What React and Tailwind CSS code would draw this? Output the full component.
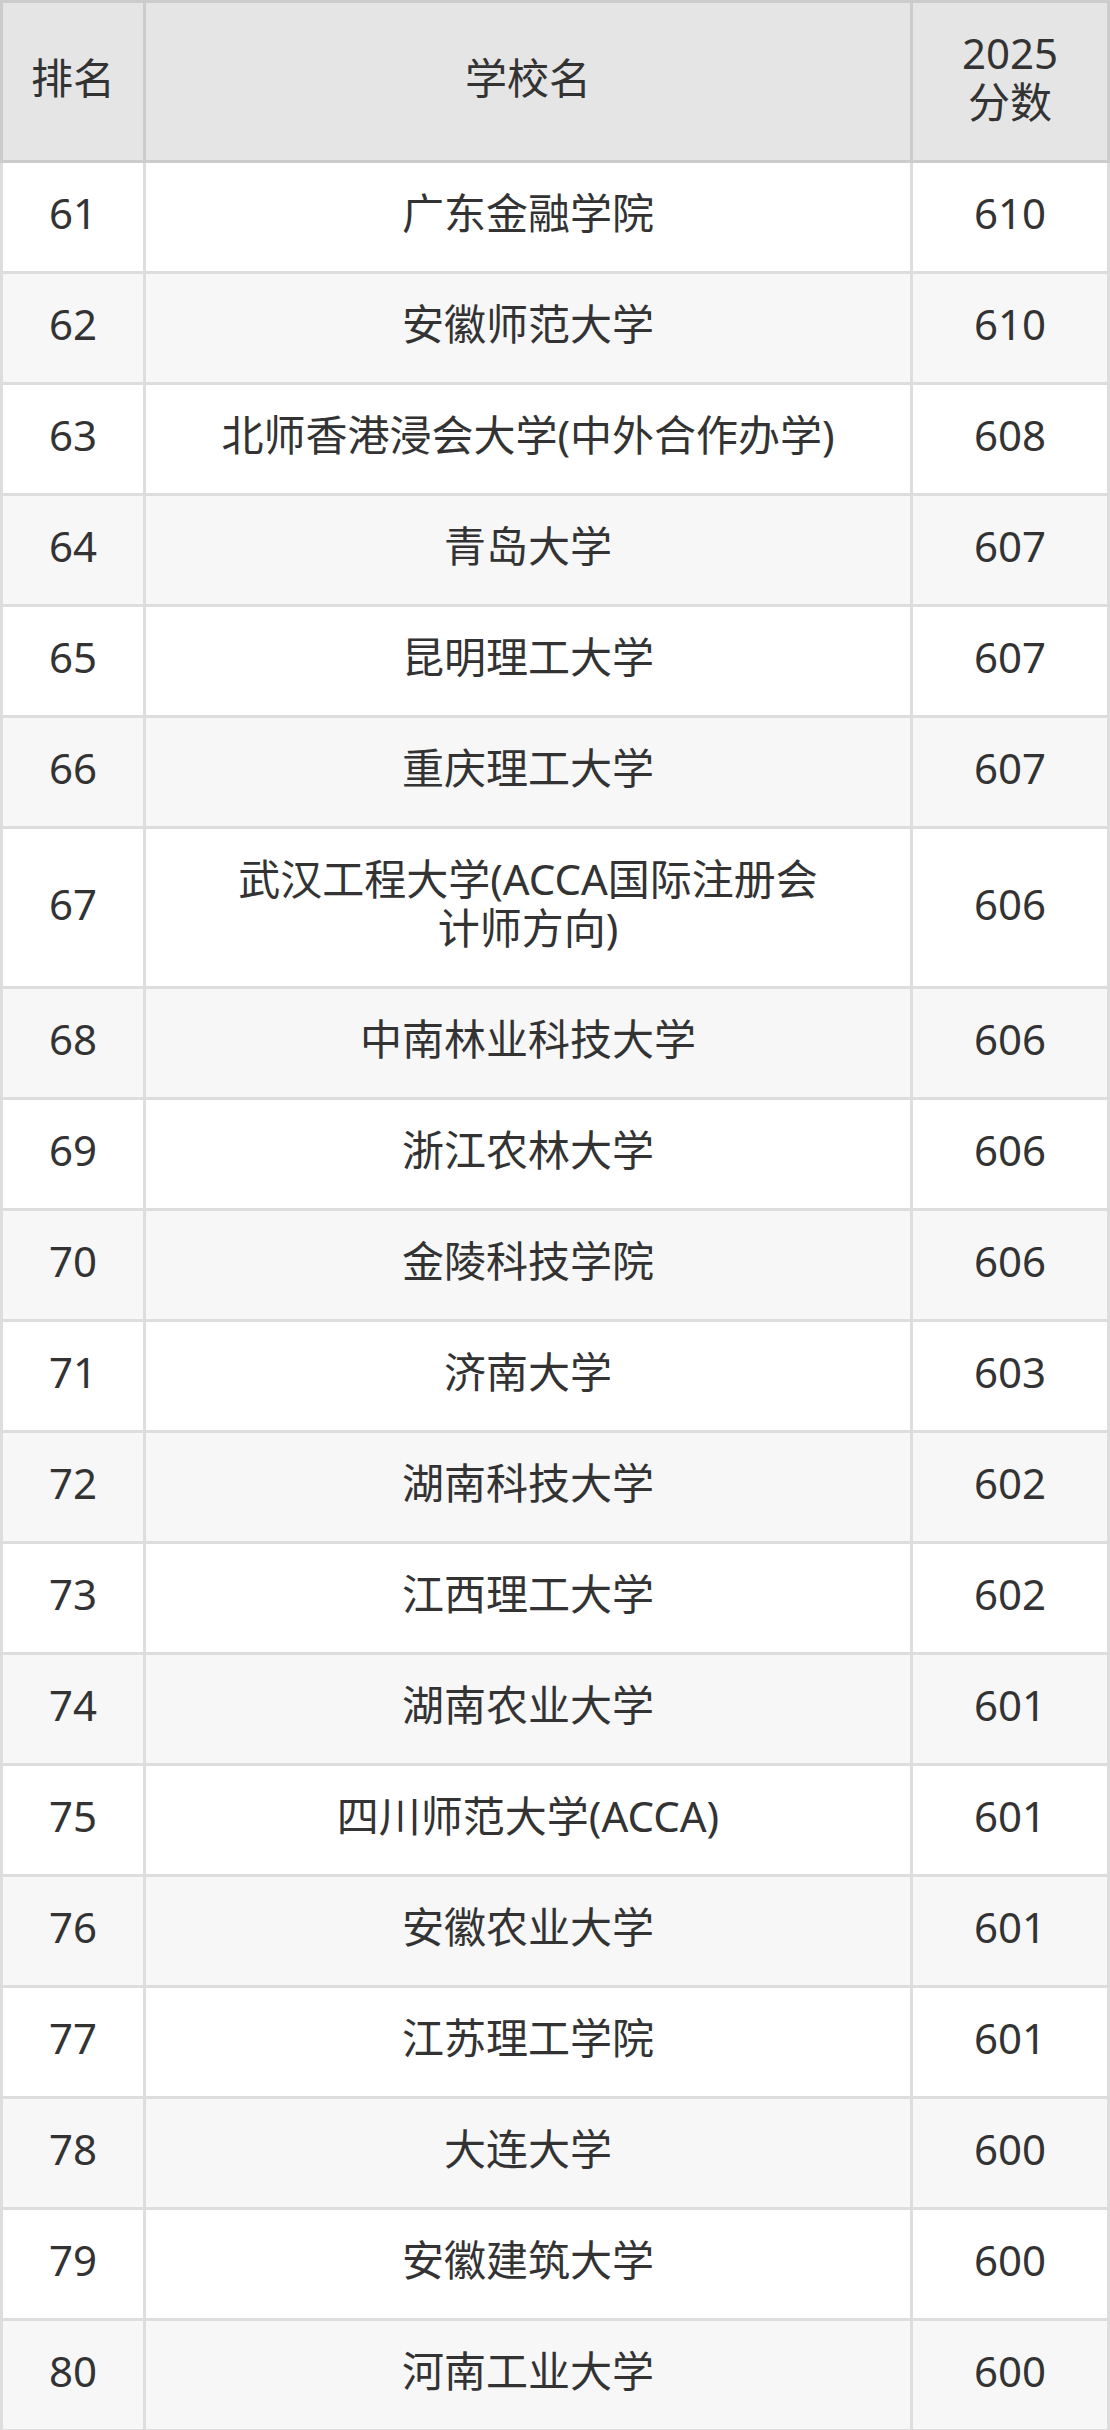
import React from "react";

const rows = [
  ["61", "广东金融学院", "610"],
  ["62", "安徽师范大学", "610"],
  ["63", "北师香港浸会大学(中外合作办学)", "608"],
  ["64", "青岛大学", "607"],
  ["65", "昆明理工大学", "607"],
  ["66", "重庆理工大学", "607"],
  ["67", ["武汉工程大学(ACCA国际注册会", "计师方向)"], "606"],
  ["68", "中南林业科技大学", "606"],
  ["69", "浙江农林大学", "606"],
  ["70", "金陵科技学院", "606"],
  ["71", "济南大学", "603"],
  ["72", "湖南科技大学", "602"],
  ["73", "江西理工大学", "602"],
  ["74", "湖南农业大学", "601"],
  ["75", "四川师范大学(ACCA)", "601"],
  ["76", "安徽农业大学", "601"],
  ["77", "江苏理工学院", "601"],
  ["78", "大连大学", "600"],
  ["79", "安徽建筑大学", "600"],
  ["80", "河南工业大学", "600"],
];

const th = "border-[3px] border-[#cccccc] px-2 pt-[25px] pb-[34px] font-normal";
const td = "border-[3px] border-[#dddddd] pt-[25px] pb-[34px]";

export default function App() {
  return (
    <div
      className="w-[1110px] bg-white text-[#333333]"
      style={{ fontFamily: '"Noto Sans", "Noto Sans CJK SC", sans-serif' }}
    >
      <table className="w-full table-fixed border-collapse text-center text-[42px] leading-[49px]">
        <colgroup>
          <col className="w-[143px]" />
          <col />
          <col className="w-[197px]" />
        </colgroup>
        <thead>
          <tr className="bg-[#e5e5e5]">
            <th className={th}>排名</th>
            <th className={th}>学校名</th>
            <th className={th}>
              2025
              <br />
              分数
            </th>
          </tr>
        </thead>
        <tbody>
          {rows.map(([rank, name, score], i) => (
            <tr key={rank} className={i % 2 === 0 ? "bg-white" : "bg-[#f7f7f7]"}>
              <td className={`${td} px-2`}>{rank}</td>
              <td className={`${td} px-[40px]`}>
                {Array.isArray(name) ? (
                  <>
                    {name[0]}
                    <br />
                    {name[1]}
                  </>
                ) : (
                  name
                )}
              </td>
              <td className={`${td} px-2`}>{score}</td>
            </tr>
          ))}
        </tbody>
      </table>
    </div>
  );
}
